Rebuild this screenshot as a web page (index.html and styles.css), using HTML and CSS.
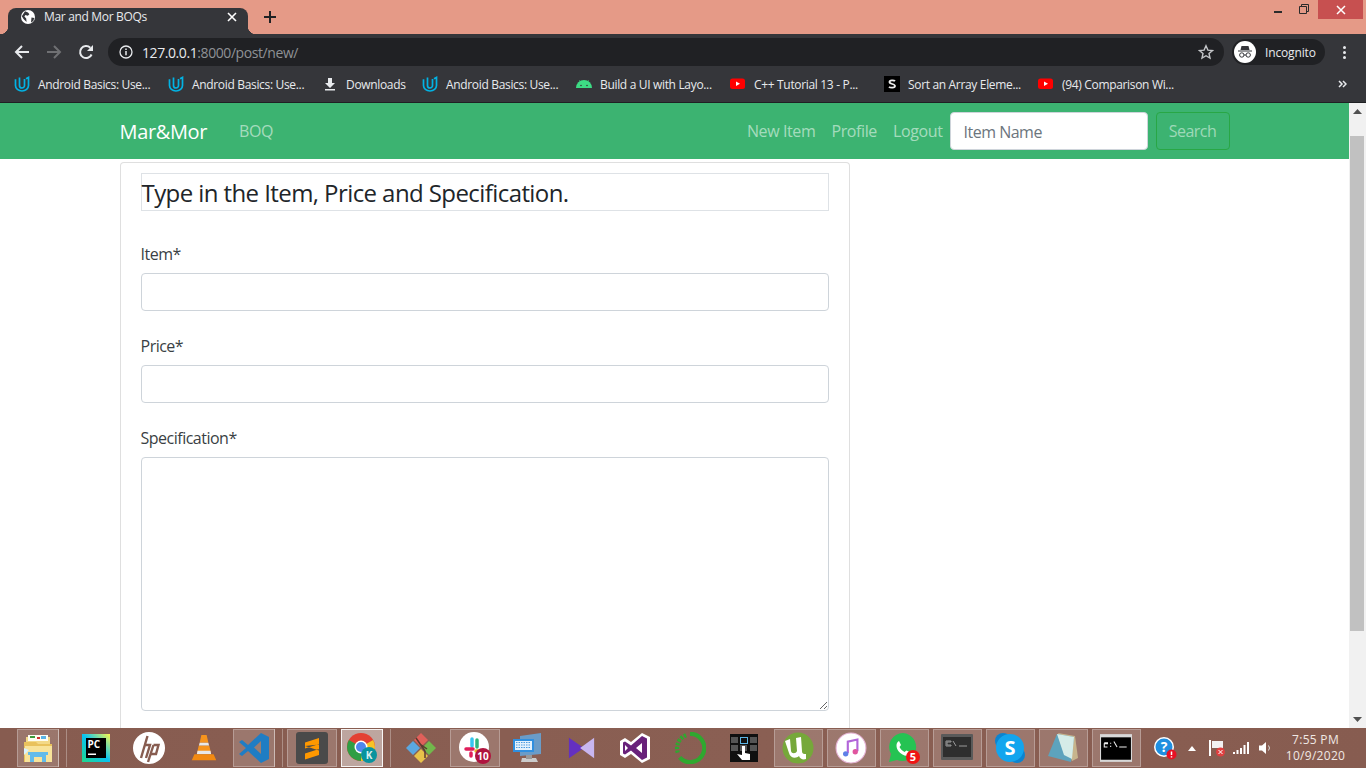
FILE: index.html
```html
<!DOCTYPE html>
<html lang="en">
<head>
<meta charset="utf-8">
<title>Mar and Mor BOQs</title>
<link rel="stylesheet" href="styles.css">
</head>
<body>
<div class="screen">
  <header class="chrome">
    <div class="tabstrip">
      <div class="tab">
        <svg class="ic16" viewBox="0 0 16 16"><circle cx="8" cy="8" r="7" fill="#fff"/><path d="M5 2.200l3 1.300 1.400 1.700-1.600 1.500-2.400-.6-1 1.400 1.800 2 .4 3.500L3.500 10 1.800 7.200zM11.500 8.500l2.800.6-1 3-2.300 1.500z" fill="#35363a"/></svg>
        <span class="tab-title">Mar and Mor BOQs</span>
        <svg class="tab-x" viewBox="0 0 10 10"><path d="M1 1l8 8M9 1l-8 8" stroke="#fff" stroke-width="1.600"/></svg>
      </div>
      <svg class="newtab" viewBox="0 0 12 12"><path d="M6 0v12M0 6h12" stroke="#202124" stroke-width="2"/></svg>
      <div class="winctl">
        <span class="win-min"></span>
        <svg class="win-res" viewBox="0 0 10 10"><path d="M.5 2.500h7v7h-7zM2.500 2.500v-2h7v7h-2" fill="none" stroke="#2b2b2b" stroke-width="1"/></svg>
        <div class="win-close"><svg viewBox="0 0 10 10"><path d="M1 1l8 8M9 1l-8 8" stroke="#fff" stroke-width="1.500"/></svg></div>
      </div>
    </div>
    <div class="toolbar">
      <svg class="nav-ic" viewBox="0 0 16 16"><path d="M15 8H2M8 2L2 8l6 6" fill="none" stroke="#e8eaed" stroke-width="2"/></svg>
      <svg class="nav-ic" viewBox="0 0 16 16"><path d="M1 8h13M8 2l6 6-6 6" fill="none" stroke="#6f7073" stroke-width="2"/></svg>
      <svg class="nav-ic" viewBox="0 0 16 16"><path d="M13.600 10.500A6 6 0 1 1 12.300 3.800" fill="none" stroke="#e8eaed" stroke-width="2"/><path d="M15 1v6H9z" fill="#e8eaed"/></svg>
      <div class="omnibox">
        <svg class="ic14" viewBox="0 0 14 14"><circle cx="7" cy="7" r="6" fill="none" stroke="#e8eaed" stroke-width="1.300"/><path d="M7 6v4.200M7 3.500v1.400" stroke="#e8eaed" stroke-width="1.500"/></svg>
        <span class="url"><span class="url-host">127.0.0.1</span>:8000/post/new/</span>
        <svg class="star" viewBox="0 0 16 16"><path d="M8 1.800l1.900 4.300 4.600.4-3.500 3 1 4.600L8 11.700l-4 2.400 1-4.600-3.500-3 4.600-.4z" fill="none" stroke="#c4c6c9" stroke-width="1.400"/></svg>
      </div>
      <div class="profile">
        <svg class="avatar" viewBox="0 0 22 22"><circle cx="11" cy="11" r="11" fill="#fff"/><path d="M7.500 5h7l1 4h-9zM4 9.500h14v1H4z" fill="#35363a"/><circle cx="7.800" cy="14" r="2.200" fill="none" stroke="#35363a"/><circle cx="14.200" cy="14" r="2.200" fill="none" stroke="#35363a"/><path d="M10 14h2" stroke="#35363a"/></svg>
        <span>Incognito</span>
      </div>
      <div class="kebab"><i></i><i></i><i></i></div>
    </div>
    <nav class="bookmarks">
      <a class="bm"><svg class="ic16" viewBox="0 0 16 16"><path d="M1.500 3.200v6.300a6.500 5.500 0 0 0 13 0V1.500l-2.500 1.300" fill="none" stroke="#02b3e4" stroke-width="1.700"/><path d="M5.500 1.500v8a2.500 2.500 0 0 0 5 0V3" fill="none" stroke="#02b3e4" stroke-width="1.700"/></svg>Android Basics: Use...</a>
      <a class="bm"><svg class="ic16" viewBox="0 0 16 16"><path d="M1.500 3.200v6.300a6.500 5.500 0 0 0 13 0V1.500l-2.500 1.300" fill="none" stroke="#02b3e4" stroke-width="1.700"/><path d="M5.500 1.500v8a2.500 2.500 0 0 0 5 0V3" fill="none" stroke="#02b3e4" stroke-width="1.700"/></svg>Android Basics: Use...</a>
      <a class="bm bm-short"><svg class="ic16" viewBox="0 0 16 16"><path d="M6 2h4v5h3l-5 5-5-5h3zM3 13h10v1.500H3z" fill="#e8eaed"/></svg>Downloads</a>
      <a class="bm"><svg class="ic16" viewBox="0 0 16 16"><path d="M1.500 3.200v6.300a6.500 5.500 0 0 0 13 0V1.500l-2.500 1.300" fill="none" stroke="#02b3e4" stroke-width="1.700"/><path d="M5.500 1.500v8a2.500 2.500 0 0 0 5 0V3" fill="none" stroke="#02b3e4" stroke-width="1.700"/></svg>Android Basics: Use...</a>
      <a class="bm"><svg class="ic16" viewBox="0 0 16 16"><path d="M0 12a8 8 0 0 1 16 0z" fill="#3ddc84"/><path d="M3.500 4.500l1.500 2.500M12.500 4.500L11 7" stroke="#3ddc84"/><circle cx="5" cy="9.500" r=".8" fill="#35363a"/><circle cx="11" cy="9.500" r=".8" fill="#35363a"/></svg>Build a UI with Layo...</a>
      <a class="bm"><svg class="ic16" viewBox="0 0 16 16"><rect y="2.500" width="15" height="10.500" rx="2.500" fill="#f00"/><path d="M6 5.500l4 2.200-4 2.200z" fill="#fff"/></svg>C++ Tutorial 13 - P...</a>
      <a class="bm"><svg class="ic16" viewBox="0 0 16 16"><rect width="16" height="16" fill="#000"/><path d="M11 5.200C10 4 5.500 3.800 5.500 6c0 2.500 5.500 1.500 5.500 4 0 2.200-4.800 2-6 .8" fill="none" stroke="#eee" stroke-width="1.800"/></svg>Sort an Array Eleme...</a>
      <a class="bm"><svg class="ic16" viewBox="0 0 16 16"><rect y="2.500" width="15" height="10.500" rx="2.500" fill="#f00"/><path d="M6 5.500l4 2.200-4 2.200z" fill="#fff"/></svg>(94) Comparison Wi...</a>
      <svg class="bm-more" viewBox="0 0 9 8"><path d="M1 1l3 3-3 3M5 1l3 3-3 3" fill="none" stroke="#e8eaed" stroke-width="1.500"/></svg>
    </nav>
  </header>

  <div class="viewport">
    <div class="page">
      <div class="navbar">
        <div class="container nav-inner">
          <a class="brand">Mar&amp;Mor</a>
          <a class="nav-link">BOQ</a>
          <div class="nav-right">
            <a class="nav-link">New Item</a>
            <a class="nav-link">Profile</a>
            <a class="nav-link nav-last">Logout</a>
            <input class="search-input" placeholder="Item Name">
            <button class="search-btn">Search</button>
          </div>
        </div>
      </div>
      <main class="container">
        <div class="card">
          <h2 class="legend">Type in the Item, Price and Specification.</h2>
          <label class="field-label">Item*</label>
          <input class="field">
          <label class="field-label">Price*</label>
          <input class="field">
          <label class="field-label">Specification*</label>
          <textarea class="field area"></textarea>
        </div>
      </main>
    </div>
    <aside class="scrollbar">
      <svg class="sb-arrow" viewBox="0 0 9 5"><path d="M4.500 0L9 5H0z" fill="#505050"/></svg>
      <div class="sb-track"><div class="sb-thumb"></div></div>
      <svg class="sb-arrow" viewBox="0 0 9 5"><path d="M0 0h9L4.500 5z" fill="#505050"/></svg>
    </aside>
  </div>

  <footer class="taskbar">
    <div class="task on stacked t-first"><svg viewBox="0 0 32 32"><path d="M4 5h24v10H4z" fill="#f3d988"/><path d="M6 3h20v6H6z" fill="#fdfdf2"/><path d="M8 4h5v2H8z" fill="#3c9a3c"/><path d="M15 5h3v2h-3z" fill="#c33"/><path d="M19 4h5v3h-5z" fill="#5ab4e5"/><path d="M2 10h12l2 2h14v18H2z" fill="#e9c25c"/><path d="M3 14h27v16H3z" fill="#f8e39a"/><path d="M6 20h20v3h-2v7h-4v-5H12v5H8v-7H6z" fill="#62bbea"/><path d="M2 16l5 2-5 5z" fill="#d8f2ff"/></svg></div>
    <div class="task"><svg class="s28" viewBox="0 0 28 28"><defs><linearGradient id="pc" x1="0" y1="1" x2="1" y2="0"><stop offset="0" stop-color="#21d789"/><stop offset=".5" stop-color="#07c3f2"/><stop offset="1" stop-color="#fcf84a"/></linearGradient></defs><rect width="28" height="28" fill="url(#pc)"/><rect x="4" y="4" width="20" height="20" fill="#000"/><text x="5.500" y="14" class="t-pc">PC</text><rect x="6" y="19.500" width="8" height="1.500" fill="#fff"/></svg></div>
    <div class="task"><svg viewBox="0 0 32 32"><circle cx="16" cy="16" r="16" fill="#fff"/><g fill="none" stroke="#875c50" stroke-width="2.400"><path d="M14.500 4L8 26"/><path d="M12 13h5l-4 13"/><path d="M20.500 13h5l-2.500 9h-5"/><path d="M20.500 13L15 30"/></g></svg></div>
    <div class="task t-vlc"><svg class="s28" viewBox="0 0 28 32"><path d="M11 1h6l2 9H9zM8 13h12l2 9H6z" fill="#f7941d"/><path d="M9 10h10l.8 3H8.200zM6.600 19h14.800l.8 4H5.800z" fill="#e8e8e8"/><path d="M3 23h22l3 7H0z" fill="#f28a12"/></svg></div>
    <div class="task on stacked t-vs"><svg viewBox="0 0 32 32"><path d="M23 1l8 4v22l-8 4-13-12-6 5-3-2 7-6-7-6 3-2 6 5z" fill="#1f7dc4"/><path d="M23 9l-7 6.500 7 6.500z" fill="#9b7d72"/></svg></div>
    <div class="task on"><svg viewBox="0 0 32 32"><rect width="32" height="32" rx="3" fill="#4a4a4a"/><path d="M23 6v6L9 16.500v-6zM9 14l14 4.500v-6zM23 17v6L9 27.500v-6z" fill="#ff9800"/></svg></div>
    <div class="task on active stacked"><svg viewBox="0 0 32 32"><circle cx="15" cy="15" r="14" fill="#e34133"/><path d="M15 15L2.900 8a14 14 0 0 0 12.100 21z" fill="#2f9e44"/><path d="M15 15l12.100-7A14 14 0 0 1 15 29z" fill="#f7c325"/><circle cx="15" cy="15" r="6.500" fill="#fff"/><circle cx="15" cy="15" r="5" fill="#4e86ec"/><circle cx="23" cy="23" r="8" fill="#08939e"/><text x="23" y="26.500" class="t-k">K</text></svg></div>
    <div class="task t-git"><svg viewBox="0 0 32 32"><path d="M16 1l7 7-7 7-7-7z" fill="#e0605a"/><path d="M8 9l7 7-7 7-7-7z" fill="#5ba7e0"/><path d="M24 9l7 7-7 7-7-7z" fill="#72b84c"/><path d="M16 17l7 7-7 7-7-7z" fill="#e8c24a"/><path d="M11 6l9 13M20 19v7M15 12l7 5" stroke="#5a3a30" stroke-width="1.500" fill="none"/></svg></div>
    <div class="task on"><svg viewBox="0 0 32 32"><circle cx="15" cy="15" r="15" fill="#fff"/><path d="M13 7v7" stroke="#36c5f0" stroke-width="3.500" stroke-linecap="round"/><path d="M18 8v7" stroke="#2eb67d" stroke-width="3.500" stroke-linecap="round"/><path d="M7 17h7" stroke="#e01e5a" stroke-width="3.500" stroke-linecap="round"/><path d="M17 19h6" stroke="#ecb22e" stroke-width="3.500" stroke-linecap="round"/><path d="M12 21v3" stroke="#e01e5a" stroke-width="3.500" stroke-linecap="round"/><circle cx="24" cy="24" r="8" fill="#b0143f"/><text x="24" y="27.500" class="t-b">10</text></svg></div>
    <div class="task"><svg viewBox="0 0 32 32"><path d="M8 4l21-3v21L8 24z" fill="#6a9cc8"/><path d="M1 7h21v13H1z" fill="#2f8fdf"/><path d="M3 9h17v9H3z" fill="#e4f2fc"/><path d="M4 10.500h15M4 13h15M4 15.500h15" stroke="#4a9be0" stroke-dasharray="1.500 1"/><path d="M10 26h14l2 4H9z" fill="#ccc"/><path d="M14 23h6v4h-6z" fill="#999"/></svg></div>
    <div class="task"><svg class="s28" viewBox="0 0 30 30"><path d="M1 4l16 11L1 26z" fill="#6430c0"/><path d="M28 4L13 15l15 11z" fill="#c8b6f0"/></svg></div>
    <div class="task"><svg viewBox="0 0 32 32"><path d="M23 1l8 4v22l-8 4-11-9-6 4-5-3V9l5-3 6 4z" fill="#fff"/><path d="M23 4l5 2.500v19L23 28l-11-9.500-6 4-2-1V10.500l2-1 6 4zm0 7l-6 5 6 5zM6 13v6l3-3z" fill="#68217a" fill-rule="evenodd"/></svg></div>
    <div class="task t-ring"><svg viewBox="0 0 34 34"><path d="M17 2a15 15 0 1 1-11 25" fill="none" stroke="#2fa82f" stroke-width="4.500"/><path d="M4 22a15 15 0 0 1 10-19" fill="none" stroke="#2fa82f" stroke-width="4.500" stroke-dasharray="2.500 1.500"/></svg></div>
    <div class="task"><svg class="s28" viewBox="0 0 28 28"><rect width="28" height="28" fill="#101010"/><path d="M1 3h7v6H1zM20 3h7v6h-7zM1 11h7v6H1zM20 11h7v6h-7zM10 11h7v6h-7z" fill="#555"/><rect x="10.500" y="3.500" width="7" height="6" fill="none" stroke="#5bb5e5"/><path d="M12 12h3v7l5 1v6h-8l-5-6 5 1z" fill="#fff"/></svg></div>
    <div class="task on t-row t-u"><svg viewBox="0 0 32 32"><circle cx="16" cy="16" r="15.500" fill="#76a83a"/><path d="M3 9l5-2 1 12c.5 3 5 3 6 0L14 6l5-1 1 14c0 3 2 3 4 3v5c-3 1-6 0-7-3-3 3-9 2-10-3z" fill="#fff"/></svg></div>
    <div class="task on t-row"><svg viewBox="0 0 30 30"><circle cx="15" cy="15" r="14" fill="#fff" stroke="#e6b3d6"/><path d="M12 20V9l9-2v11" fill="none" stroke="#b265d9" stroke-width="2"/><circle cx="10" cy="20.500" r="2.500" fill="#5f80e8"/><circle cx="19" cy="18.500" r="2.500" fill="#e0559e"/></svg></div>
    <div class="task on t-row"><svg viewBox="0 0 32 32"><path d="M15 1a14 14 0 0 0-12 21L1 30l8-2a14 14 0 1 0 6-27z" fill="#25c353"/><path d="M11 9l2 4-1.500 2c1 2 3 4 5 5l2-1.500 4 2c-1 4-5 4-8 2-3-1.500-6-5-6-9 0-2 1-4 2.500-4.500z" fill="#fff"/><circle cx="25" cy="25" r="7" fill="#f01414"/><text x="25" y="29" class="t-w">5</text></svg></div>
    <div class="task on t-row"><svg viewBox="0 0 32 28"><rect width="32" height="26" rx="1" fill="#5a5a5a"/><rect x="2" y="3" width="28" height="20" fill="#2e2e2e"/><path d="M5 7h5v1H6v3h4v1H5zM12 7l3 5M18 12h8" stroke="#999" fill="none"/></svg></div>
    <div class="task on t-row"><svg viewBox="0 0 32 32"><circle cx="9" cy="9" r="8" fill="#0b84d0"/><circle cx="23" cy="23" r="8" fill="#0b84d0"/><circle cx="16" cy="16" r="14" fill="#12a5ee"/><text x="16" y="23" class="t-s">S</text></svg></div>
    <div class="task on t-row"><svg viewBox="0 0 32 32"><path d="M11 1l17 3 3 22-6 3z" fill="#c7b48c"/><path d="M10 2l17 3-3 25L1 24z" fill="#5da3bd"/><path d="M10 2l17 3-2 22-8-4z" fill="#d5ece8"/></svg></div>
    <div class="task on t-row"><svg viewBox="0 0 30 26"><rect width="30" height="26" fill="#d8d8d8"/><rect x="1" y="3" width="28" height="21" fill="#000"/><path d="M4 8h3v1H4v3h3M10 8v1M10 11v1M13 7l3 5M18 12h7" stroke="#eee" fill="none"/></svg></div>
    <div class="tray">
      <svg class="tr-help" viewBox="0 0 24 24"><circle cx="11" cy="11" r="10" fill="#fff"/><circle cx="11" cy="11" r="8.500" fill="#1f8fe0"/><text x="11" y="16" class="t-q">?</text><circle cx="18.500" cy="18.500" r="5" fill="#e81123"/><path d="M18.500 15.500v3.500M18.500 20.300v1.300" stroke="#fff" stroke-width="1.500"/></svg>
      <svg class="tr-up" viewBox="0 0 8 5"><path d="M4 0l4 5H0z" fill="#fff"/></svg>
      <svg class="tr-flag" viewBox="0 0 18 18"><path d="M2 1v16" stroke="#fff" stroke-width="2"/><path d="M4 2h11v7H4z" fill="#f2f2f2"/><circle cx="12.500" cy="13" r="4.500" fill="#e04040"/><path d="M10.500 11l4 4M14.500 11l-4 4" stroke="#fff"/></svg>
      <svg class="tr-sig" viewBox="0 0 16 12"><path d="M0 10h2v2H0zM3.500 8h2v4h-2zM7 6h2v6H7zM10.500 3h2v9h-2zM14 0h2v12h-2z" fill="#fff"/></svg>
      <svg class="tr-vol" viewBox="0 0 14 14"><path d="M1 4.500h3L8 1v12L4 9.500H1z" fill="#fff"/><path d="M10.500 4.500a4 4 0 0 1 0 5" fill="none" stroke="#ddd"/></svg>
      <div class="clock"><span>7:55 PM</span><span>10/9/2020</span></div>
    </div>
  </footer>
</div>
</body>
</html>
```
FILE: styles.css
```css
* { box-sizing: border-box; }
html, body { margin: 0; padding: 0; height: 100%; overflow: hidden; }
body { font-family: "Open Sans", "Noto Sans", sans-serif; color: #212529; background: #fff; }
svg { display: block; flex: none; }
.screen { width: 1366px; height: 768px; display: flex; flex-direction: column; }

/* Browser chrome */
.chrome { height: 103px; background: #35363a; color: #e8eaed; flex: none; border-bottom: 1px solid #1f2023; }
.tabstrip { height: 34px; background: #e59a87; display: flex; align-items: flex-end; padding-left: 8px; position: relative; }
.tab { width: 240px; height: 26px; background: #35363a; border-radius: 8px 8px 0 0; display: flex; align-items: center; padding: 0 0 8px 12px; position: relative; }
.tab::before, .tab::after { content: ""; position: absolute; bottom: 0; width: 8px; height: 8px; }
.tab::before { left: -8px; background: radial-gradient(circle at 0 0, transparent 8px, #35363a 8.500px); }
.tab::after { right: -8px; background: radial-gradient(circle at 100% 0, transparent 8px, #35363a 8.500px); }
.ic16 { width: 16px; height: 16px; }
.tab-title { margin: -2px 0 0 8px; font-size: 12px; letter-spacing: -.33px; color: #e8eaed; flex: 1; white-space: nowrap; }
.tab-x { width: 10px; height: 10px; margin-right: 11px; }
.newtab { width: 12px; height: 12px; margin: 0 0 11px 16px; }
.winctl { position: absolute; top: 0; right: 3px; display: flex; align-items: flex-start; }
.win-min { width: 8px; height: 2px; background: #2b2b2b; margin: 11px 17px 0 0; }
.win-res { width: 10px; height: 10px; margin: 4px 9px 0 0; }
.win-close { width: 45px; height: 19px; background: #c75050; display: flex; align-items: center; justify-content: center; }
.win-close svg { width: 10px; height: 10px; }

.toolbar { height: 34px; display: flex; align-items: center; padding: 2px 0 0 14px; }
.nav-ic { width: 16px; height: 16px; margin-right: 16px; }
.omnibox { width: 1116px; height: 28px; margin-left: -2px; border-radius: 14px; background: #202124; display: flex; align-items: center; padding: 0 10px 0 11px; flex: none; }
.ic14 { width: 14px; height: 14px; }
.url { margin-left: 9px; font-size: 14px; letter-spacing: -.42px; color: #8f9296; flex: 1; }
.url-host { color: #e8eaed; }
.star { width: 16px; height: 16px; }
.profile { width: 93px; height: 26px; margin-left: 8px; border-radius: 13px; background: #202124; display: flex; align-items: center; padding-left: 2px; font-size: 12px; letter-spacing: -.15px; color: #e8eaed; gap: 9px; }
.avatar { width: 22px; height: 22px; }
.kebab { margin-left: 18px; display: flex; flex-direction: column; gap: 2px; }
.kebab i { width: 3px; height: 3px; border-radius: 50%; background: #e8eaed; display: block; }

.bookmarks { height: 34px; display: flex; align-items: center; padding: 0 0 2px 14px; position: relative; font-size: 12px; }
.bm { width: 154px; display: flex; align-items: center; gap: 8px; letter-spacing: -.33px; color: #e8eaed; white-space: nowrap; flex: none; }
.bm-short { width: 100px; }
.bm-more { width: 9px; height: 8px; position: absolute; right: 19px; top: 12px; }

/* Page */
.viewport { flex: 1; display: flex; min-height: 0; overflow: hidden; }
.page { flex: 1; min-width: 0; overflow: hidden; }
.container { width: 1140px; margin: 0 auto; padding: 0 15px; }
.navbar { height: 56px; background: #3cb371; }
.nav-inner { height: 56px; display: flex; align-items: center; }
.brand { font-size: 20px; color: #fff; letter-spacing: -.35px; margin-right: 32px; }
.nav-link { font-size: 16px; letter-spacing: -.38px; color: rgba(255,255,255,.55); }
.nav-right { margin-left: auto; display: flex; align-items: center; gap: 16px; }
.nav-last { margin-right: -9px; }
.search-input { width: 198px; height: 38px; border: 1px solid #ced4da; border-radius: 4px; padding: 2px 13px 0; font: 16px "Open Sans", sans-serif; letter-spacing: -.5px; background: #fff; outline: 0; }
.search-input::placeholder { color: #6c757d; opacity: 1; }
.search-btn { width: 74px; height: 38px; margin-left: -8px; border: 1px solid #28a745; border-radius: 4px; background: transparent; color: rgba(255,255,255,.5); font: 16px "Open Sans", sans-serif; letter-spacing: -.5px; padding: 0; }
.card { width: 730px; margin-top: 3px; border: 1px solid #dfdfdf; border-bottom: 0; border-radius: 4px 4px 0 0; padding: 10px 20px 0; height: 600px; }
.legend { margin: 0 0 31px; height: 38px; border: 1px solid #dee2e6; font-size: 24px; font-weight: 400; line-height: 38px; letter-spacing: -.58px; color: #212529; white-space: nowrap; }
.field-label { display: block; height: 24px; margin-bottom: 7px; font-size: 16px; line-height: 24px; letter-spacing: -.5px; color: #3a3f44; }
.field { display: block; width: 688px; height: 38px; margin: 0 0 23px; border: 1px solid #ced4da; border-radius: 4px; background: #fff; outline: 0; }
.area { height: 254px; resize: vertical; }
.scrollbar { width: 17px; background: #f1f1f1; display: flex; flex-direction: column; align-items: center; flex: none; }
.sb-arrow { width: 9px; height: 5px; margin: 6px 0; }
.sb-track { flex: 1; width: 100%; padding-top: 16px; }
.sb-thumb { height: 495px; margin: 0 2px 0 1px; background: #c1c1c1; }

/* Taskbar */
.taskbar { height: 40px; flex: none; display: flex; align-items: center; background: linear-gradient(100deg, #875c50 0%, #8a5f53 55%, #875c50 100%); padding-left: 15px; }
.task { width: 53.500px; height: 40px; display: flex; align-items: center; justify-content: center; flex: none; position: relative; }
.task svg { width: 32px; height: 32px; position: relative; }
.task svg.s28 { width: 28px; height: 28px; }
.task.on::before { content: ""; position: absolute; top: 1px; bottom: 1px; left: 2px; right: 2px; background: rgba(255,255,255,.16); border: 1px solid rgba(255,255,255,.28); }
.task.active::before { background: rgba(255,255,255,.45); border-color: rgba(255,255,255,.85); }
.task.stacked { width: 54px; padding-right: 8px; }
.task.stacked::before { right: 10px; }
.task.stacked::after { content: ""; position: absolute; top: 1px; bottom: 1px; right: 2px; width: 7px; border-left: 1px solid rgba(255,255,255,.3); border-right: 1px solid rgba(255,255,255,.3); }
.t-vlc { margin-left: 1px; }
.t-vs { margin-left: .5px; }
.t-git { margin-left: 2px; }
.t-ring { margin-left: 1.500px; }
.t-u { margin-left: 1px; }
.task.t-row { width: 53px; }
.tray { flex: 1; display: flex; align-items: center; height: 40px; padding-left: 10px; }
.tr-help { width: 24px; height: 24px; }
.tr-up { width: 8px; height: 5px; margin-left: 11px; }
.tr-flag { width: 18px; height: 18px; margin-left: 12px; }
.tr-sig { width: 16px; height: 12px; margin-left: 7px; }
.tr-vol { width: 14px; height: 14px; margin-left: 9px; }
.clock { margin-left: 10px; display: flex; flex-direction: column; align-items: center; width: 68px; font-size: 12px; line-height: 16px; letter-spacing: .3px; color: #f0e8e4; }
.t-pc { font: 700 10px "Open Sans", sans-serif; fill: #fff; }
.t-k { font: 700 10px "Open Sans", sans-serif; fill: #d8f0f0; text-anchor: middle; }
.t-b { font: 700 10px "Open Sans", sans-serif; fill: #fff; text-anchor: middle; }
.t-w { font: 700 11px "Open Sans", sans-serif; fill: #fff; text-anchor: middle; }
.t-s { font: 700 20px "Open Sans", sans-serif; fill: #fff; text-anchor: middle; }
.t-q { font: 700 14px "Open Sans", sans-serif; fill: #fff; text-anchor: middle; }
```
